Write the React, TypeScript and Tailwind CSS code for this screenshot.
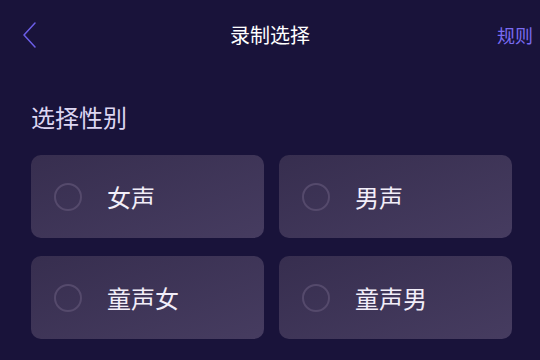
import React from "react";

const options = ["女声", "男声", "童声女", "童声男"];

const App: React.FC = () => {
  return (
    <div
      className="w-[540px] h-[360px] overflow-hidden bg-[#19133a]"
      style={{ fontFamily: '"Noto Sans CJK SC", "Noto Sans", sans-serif' }}
    >
      {/* header */}
      <div className="grid grid-cols-[1fr_auto_1fr] items-center h-[70px]">
        <div className="pl-[22px]">
          <svg width="16" height="26" viewBox="0 0 16 26" fill="none">
            <path d="M13 1 L2 13 L13 25" stroke="#6b5de6" strokeWidth="1.5" strokeLinecap="round" strokeLinejoin="round" />
          </svg>
        </div>
        <h1 className="text-white text-[20px] leading-none">录制选择</h1>
        <div className="text-right pr-[7px] text-[18px] leading-none text-[#7a6cf2]">规则</div>
      </div>

      <div className="pl-[31px] pr-[28px]">
        <h2 className="mt-[35px] text-[24px] leading-none text-[#ddd6f2]">选择性别</h2>
        <div className="grid grid-cols-2 gap-x-[15px] gap-y-[18px] mt-[26px]">
          {options.map((label) => (
            <div
              key={label}
              className="h-[83px] rounded-[10px] bg-gradient-to-br from-[#372e4f] to-[#463c60] flex items-center pl-[23px]"
            >
              <span className="w-[28px] h-[28px] rounded-full border-2 border-[#554a6c] shrink-0" />
              <span className="ml-[25px] text-[24px] leading-none text-[#f2eef9]">{label}</span>
            </div>
          ))}
        </div>
      </div>
    </div>
  );
};

export default App;
